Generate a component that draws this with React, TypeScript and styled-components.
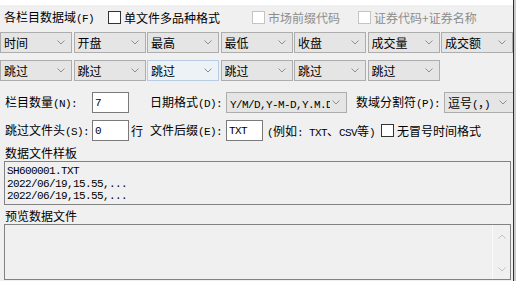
import styled, { createGlobalStyle } from "styled-components";

const GlobalStyle = createGlobalStyle`
  html, body {
    margin: 0;
    padding: 0;
    background: #f0f0f0;
  }
  body {
    width: 516px;
    height: 281px;
    overflow: hidden;
    font-family: "Noto Sans CJK SC", "Noto Sans", sans-serif;
    font-size: 12px;
    color: #000;
  }
  * {
    box-sizing: border-box;
  }
`;

const Window = styled.div`
  display: flex;
  width: 516px;
  height: 281px;
`;
const Panel = styled.div`
  width: 513px;
  display: flex;
  flex-direction: column;
  background: #f0f0f0;
`;
const TopStrip = styled.div`
  height: 5px;
  background: #fff;
`;
const Edge = styled.div`
  width: 3px;
  background: #c9ccc9;
  border-left: 1px solid #2e2e2e;
`;
const Asc = styled.span`
  font-family: "Liberation Mono", monospace;
  font-size: 11px;
  letter-spacing: -0.6px;
  white-space: pre;
`;
const TopRow = styled.div`
  display: grid;
  grid-template-columns: 104px 144px 106px auto;
  align-items: center;
  height: 23px;
  margin-top: 1px;
  padding-left: 4px;
`;
const Text = styled.span<{ $disabled?: boolean }>`
  white-space: nowrap;
  line-height: 16px;
  color: ${(p) => (p.$disabled ? "#8d8d8d" : "#000")};
`;
const Check = styled.label<{ $disabled?: boolean }>`
  display: flex;
  align-items: center;
  gap: 3px;
  white-space: nowrap;
  color: ${(p) => (p.$disabled ? "#8d8d8d" : "#000")};
`;
const Box = styled.span<{ $disabled?: boolean }>`
  width: 13px;
  height: 13px;
  background: #fff;
  border: 1px solid ${(p) => (p.$disabled ? "#c4c4c4" : "#333")};
`;
const SelectGrid = styled.div`
  display: grid;
  grid-template-columns: repeat(7, 72px);
  grid-template-rows: 21px 20px;
  column-gap: 1.5px;
  row-gap: 7px;
  margin-top: 3px;
`;
const Select = styled.div<{ $active?: boolean; $w?: number }>`
  display: flex;
  align-items: center;
  justify-content: space-between;
  gap: 2px;
  height: 21px;
  width: ${(p) => (p.$w ? `${p.$w}px` : "auto")};
  padding: 0 6px 0 3px;
  background: ${(p) => (p.$active ? "#edf2f7" : "#e5e5e5")};
  border: 1px solid ${(p) => (p.$active ? "#b7cce2" : "#adadad")};
  overflow: hidden;
  white-space: nowrap;
  span.v {
    overflow: hidden;
  }
  svg {
    flex-shrink: 0;
  }
`;
const FieldGrid = styled.div`
  display: grid;
  grid-template-columns: 87px 37px 21px 76px 1fr;
  grid-template-rows: 21px 21px;
  row-gap: 7px;
  align-items: center;
  margin-top: 12px;
  padding-left: 5px;
`;
const Input = styled.div`
  height: 21px;
  background: #fff;
  border: 1px solid #7a7a7a;
  padding-left: 2px;
  display: flex;
  align-items: center;
`;
const Unit = styled.span`
  padding-left: 2px;
`;
const Cluster = styled.div`
  display: flex;
  align-items: center;
`;
const Hint = styled.span`
  width: 118px;
  padding-left: 4px;
  white-space: nowrap;
`;
const SectionLabel = styled.div<{ $h: number }>`
  height: ${(p) => p.$h}px;
  padding-left: 5px;
  display: flex;
  align-items: flex-end;
  line-height: 16px;
`;
const SampleBox = styled.div`
  margin: 0 2px 0 4px;
  height: 44px;
  border: 1px solid #828282;
  padding: 3px 2px;
  font-family: "Liberation Mono", monospace;
  font-size: 11px;
  letter-spacing: -0.6px;
  line-height: 12.5px;
`;
const PreviewBox = styled.div`
  margin: 0 2px 0 4px;
  height: 56px;
  border: 1px solid #828282;
  display: flex;
`;
const PreviewArea = styled.div`
  flex: 1;
`;
const ScrollBar = styled.div`
  width: 18px;
  border-left: 1px solid #fafafa;
  display: flex;
  flex-direction: column;
  justify-content: space-between;
  align-items: center;
  padding: 9px 0 7px;
`;

const Chevron = ({ up, color = "#8f8f8f" }: { up?: boolean; color?: string }) => (
  <svg width="8" height="5" viewBox="0 0 8 5">
    <polyline
      points={up ? "0.5,4.5 4,1 7.5,4.5" : "0.5,0.5 4,4 7.5,0.5"}
      fill="none"
      stroke={color}
      strokeWidth="1"
    />
  </svg>
);

const T = ({ s }: { s: string }) => (
  <>
    {s
      .split(/([\x20-\x7e]+)/)
      .filter(Boolean)
      .map((part, i) =>
        /^[\x20-\x7e]+$/.test(part) ? <Asc key={i}>{part}</Asc> : <span key={i}>{part}</span>
      )}
  </>
);

const Drop = ({ label, active, w }: { label: string; active?: boolean; w?: number }) => (
  <Select $active={active} $w={w}>
    <span className="v">
      <T s={label} />
    </span>
    <Chevron />
  </Select>
);

const fields = ["时间", "开盘", "最高", "最低", "收盘", "成交量", "成交额"];
const skips = [0, 1, 2, 3, 4, 5];

export default function App() {
  return (
    <Window>
      <GlobalStyle />
      <Panel>
        <TopStrip />
        <TopRow>
          <Text>
            <T s="各栏目数据域(F)" />
          </Text>
          <Check>
            <Box />
            单文件多品种格式
          </Check>
          <Check $disabled>
            <Box $disabled />
            市场前缀代码
          </Check>
          <Check $disabled>
            <Box $disabled />
            证券代码+证券名称
          </Check>
        </TopRow>
        <SelectGrid>
          {fields.map((f) => (
            <Drop key={f} label={f} />
          ))}
          {skips.map((i) => (
            <Drop key={i} label="跳过" active={i === 2} />
          ))}
        </SelectGrid>
        <FieldGrid>
          <Text>
            <T s="栏目数量(N):" />
          </Text>
          <Input>
            <Asc>7</Asc>
          </Input>
          <span />
          <Text>
            <T s="日期格式(D):" />
          </Text>
          <Cluster>
            <Drop label="Y/M/D,Y-M-D,Y.M.D" w={121} />
            <Text style={{ marginLeft: 9, width: 88 }}>
              <T s="数域分割符(P):" />
            </Text>
            <Drop label="逗号(，)" w={70} />
          </Cluster>

          <Text>
            <T s="跳过文件头(S):" />
          </Text>
          <Input>
            <Asc>0</Asc>
          </Input>
          <Unit>行</Unit>
          <Text>
            <T s="文件后缀(E):" />
          </Text>
          <Cluster>
            <Input style={{ width: 37 }}>
              <Asc>TXT</Asc>
            </Input>
            <Hint>
              <T s="(例如: TXT、CSV等)" />
            </Hint>
            <Check>
              <Box />
              无冒号时间格式
            </Check>
          </Cluster>
        </FieldGrid>
        <SectionLabel $h={20}>数据文件样板</SectionLabel>
        <SampleBox>
          <div>SH600001.TXT</div>
          <div>2022/06/19,15.55,...</div>
          <div>2022/06/19,15.55,...</div>
        </SampleBox>
        <SectionLabel $h={19}>预览数据文件</SectionLabel>
        <PreviewBox>
          <PreviewArea />
          <ScrollBar>
            <Chevron up color="#c2c2c2" />
            <Chevron color="#c2c2c2" />
          </ScrollBar>
        </PreviewBox>
      </Panel>
      <Edge />
    </Window>
  );
}
